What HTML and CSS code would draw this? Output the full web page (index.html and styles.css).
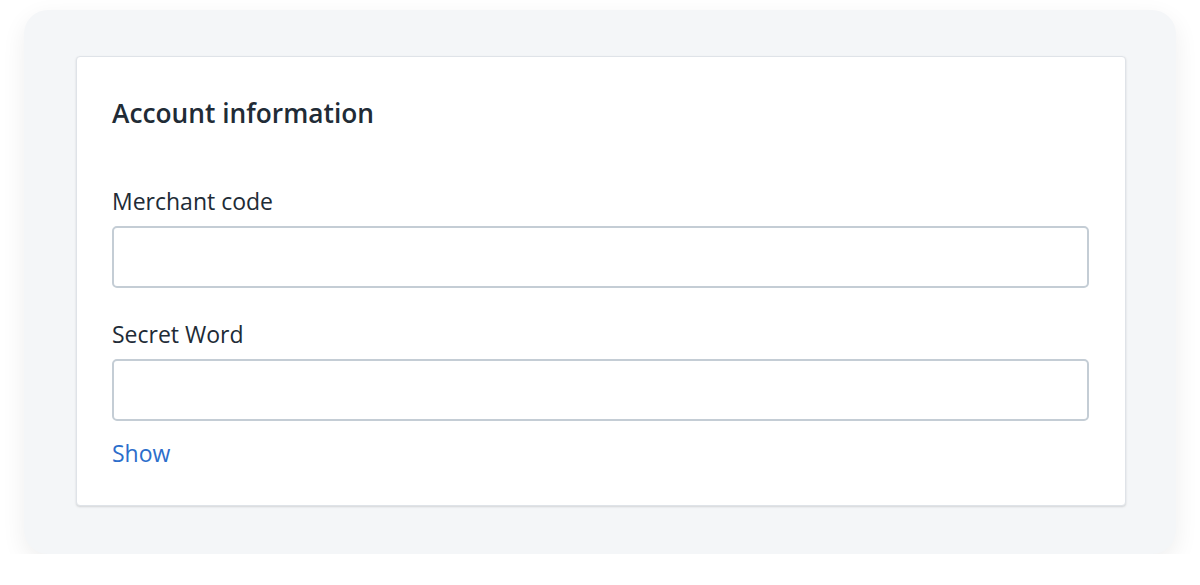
FILE: index.html
```html
<!DOCTYPE html>
<html>
<head>
<meta charset="utf-8">
<link rel="stylesheet" href="styles.css">
</head>
<body>
<div class="panel">
  <div class="card">
    <h2 class="title">Account information</h2>
    <div class="field">
      <label class="label">Merchant code</label>
      <input class="input" type="text">
    </div>
    <div class="field">
      <label class="label">Secret Word</label>
      <input class="input" type="password">
    </div>
    <a class="show">Show</a>
  </div>
</div>
</body>
</html>
```
FILE: styles.css
```css
html, body {
  margin: 0;
  padding: 0;
  background: #ffffff;
}
body {
  font-family: "Open Sans", "Noto Sans", sans-serif;
  color: #212b36;
  padding: 10px 24px 0 24px;
}
.panel {
  width: 1152px;
  height: 544px;
  box-sizing: border-box;
  background: #f4f6f8;
  border-radius: 24px;
  box-shadow: 0 8px 24px rgba(0,0,0,0.07);
  padding: 46px 50px 0 52px;
}
.card {
  background: #fff;
  border-radius: 4px;
  border: 1px solid #dfe3e8;
  box-shadow: 0 1px 2px rgba(63,63,68,0.18);
  height: 450px;
  box-sizing: border-box;
  padding: 40px 36px 0 35px;
}
.title {
  margin: 0 0 57px 0;
  font-size: 26.3px;
  font-weight: 600;
  line-height: 32px;
}
.field {
  display: flex;
  flex-direction: column;
}
.label {
  font-size: 23px;
  line-height: 30px;
  margin-bottom: 10px;
}
.input {
  height: 62px;
  box-sizing: border-box;
  border: 2px solid #c4cdd5;
  border-radius: 5px;
  margin: 0 0 31px 0;
}
.field + .field .input {
  margin-bottom: 17px;
}
.show {
  display: block;
  font-size: 23px;
  line-height: 30px;
  color: #2c6ecb;
}
```
